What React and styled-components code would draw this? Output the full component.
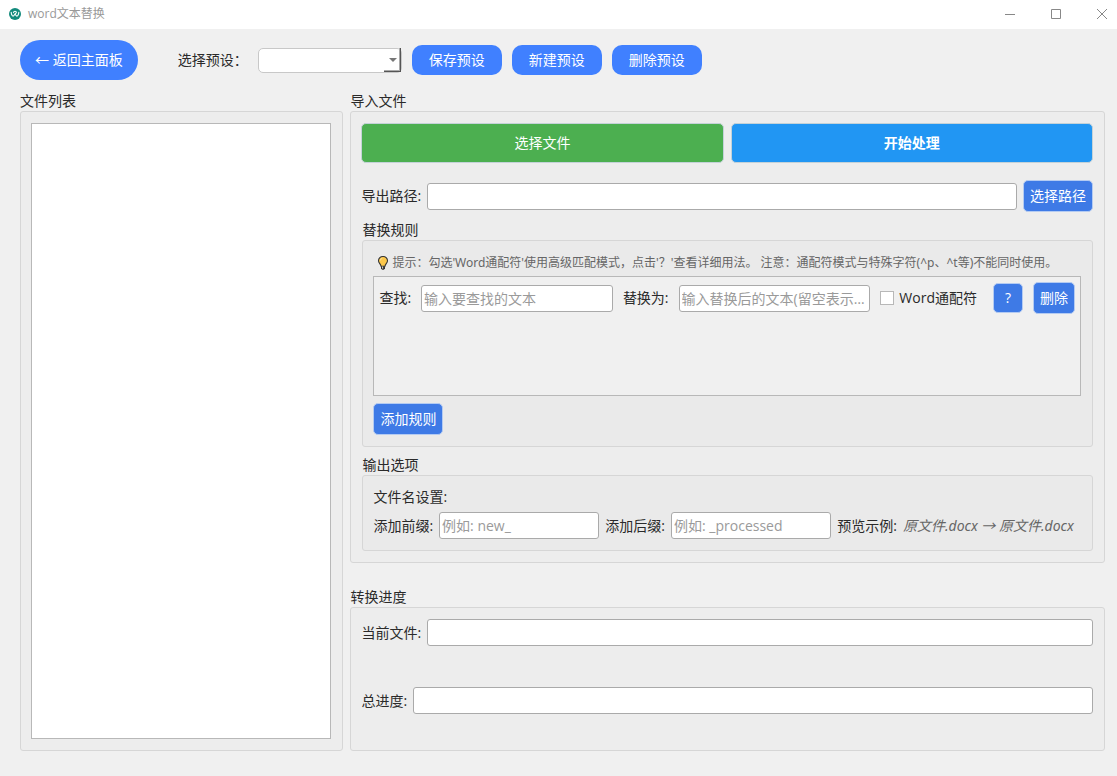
import React from "react";
import styled, { createGlobalStyle } from "styled-components";

const GlobalStyle = createGlobalStyle`
  * {
    box-sizing: border-box;
  }
  body {
    margin: 0;
    background: #f0f0f0;
  }
  body, button, input, select {
    font-family: "Open Sans", "Noto Sans CJK SC", sans-serif;
    font-size: 14px;
    line-height: 18px;
    color: #2a2a2a;
  }
`;

const Window = styled.div`
  display: flex;
  flex-direction: column;
  min-height: 100vh;
`;

const TitleBar = styled.header`
  display: flex;
  align-items: center;
  height: 29px;
  padding: 0 1px 2px 8px;
  background: #fff;
`;

const Title = styled.h1`
  flex: 1;
  margin: 0 0 0 6px;
  font-size: 12px;
  font-weight: 400;
  color: #999;
`;

const WindowButton = styled.button`
  display: flex;
  justify-content: center;
  width: 28px;
  margin-left: 18px;
  padding: 0;
  border: 0;
  background: none;
`;

const Main = styled.main`
  flex: 1;
  display: flex;
  flex-direction: column;
  gap: 12px;
  padding: 11px 12px 25px 20px;
`;

const Toolbar = styled.div`
  display: flex;
  align-items: center;
  gap: 10px;
`;

const PillButton = styled.button`
  height: ${(p) => (p.$large ? 40 : 30)}px;
  padding: 0 ${(p) => (p.$large ? 15 : 17)}px;
  border: 0;
  border-radius: ${(p) => (p.$large ? 20 : 10)}px;
  background: #4080ff;
  color: #fff;
`;

const PresetLabel = styled.label`
  margin: 0 0 0 30px;
`;

const SelectBox = styled.div`
  position: relative;
  width: 144px;

  &::before {
    content: "";
    position: absolute;
    right: 1px;
    bottom: 1px;
    width: 16px;
    height: 23px;
    border: solid #555;
    border-width: 0 1px 1px 0;
    box-shadow: inset -1px -1px #aaa;
    pointer-events: none;
  }

  &::after {
    content: "";
    position: absolute;
    right: 5px;
    top: 10px;
    border: 4px solid transparent;
    border-top-color: #777;
    border-bottom: 0;
    pointer-events: none;
  }
`;

const Select = styled.select`
  display: block;
  width: 100%;
  height: 25px;
  padding: 0 20px 0 6px;
  border: 1px solid #c8c8c8;
  border-radius: 5px;
  background: #fff;
  appearance: none;
`;

const Columns = styled.div`
  flex: 1;
  display: grid;
  grid-template-columns: 3fr 7fr;
  gap: 7px;
`;

const Column = styled.div`
  display: flex;
  flex-direction: column;
  gap: 25px;
  min-width: 0;
`;

const Group = styled.section`
  flex: ${(p) => (p.$grow ? "1 0 auto" : "none")};
  display: flex;
  flex-direction: column;
`;

const GroupTitle = styled.h2`
  margin: 0;
  padding-bottom: 2px;
  font-size: 14px;
  line-height: 17px;
  font-weight: 400;
`;

const GroupBody = styled.div`
  flex: 1;
  display: flex;
  flex-direction: column;
  gap: ${(p) => p.$gap || 0}px;
  padding: ${(p) => (p.$nested ? 12 : 11)}px 11px 11px 10px;
  border: 1px solid #d6d6d6;
  border-radius: 3px;
  background: ${(p) => (p.$nested ? "#eaeaea" : "#ededed")};
`;

const FileList = styled.ul`
  flex: 1;
  margin: 0;
  padding: 0;
  border: 1px solid #b8b8b8;
  background: #fff;
  list-style: none;
`;

const Actions = styled.div`
  display: grid;
  grid-template-columns: 1fr 1fr;
  gap: 7px;
  margin-bottom: 17px;
`;

const ActionButton = styled.button`
  height: 40px;
  border: 1px solid #c4d2d8;
  border-radius: 5px;
  background: ${(p) => p.$color};
  color: #fff;
  font-weight: ${(p) => (p.$bold ? 700 : 400)};
`;

const Row = styled.div`
  display: flex;
  align-items: center;
  gap: 6px;
`;

const Label = styled.label`
  flex: none;
  white-space: nowrap;
`;

const TextInput = styled.input`
  flex: 1;
  min-width: 0;
  height: 27px;
  padding: 0 2px;
  border: 1px solid #aaa;
  border-radius: 3px;
  background: #fff;
  text-overflow: ellipsis;

  &::placeholder {
    color: #9a9a9a;
  }
`;

const SmallButton = styled.button`
  flex: none;
  align-self: ${(p) => p.$align || "auto"};
  width: ${(p) => (p.$square ? "30px" : "auto")};
  height: ${(p) => (p.$square ? 30 : 32)}px;
  padding: 0 ${(p) => (p.$square ? 0 : 6)}px;
  border: 1px solid #b4cbf2;
  border-radius: 5px;
  background: #3e7ae6;
  color: #fff;
`;

const Sections = styled.div`
  display: flex;
  flex-direction: column;
  gap: 9px;
  margin: 9px 0 0 1px;
`;

const Hint = styled.p`
  display: flex;
  align-items: center;
  gap: 3px;
  height: 23px;
  margin: 0;
  padding: 0 0 4px 4px;
  font-family: "Noto Sans", "Noto Sans CJK SC", sans-serif;
  font-size: 12px;
  color: #666;
`;

const Rules = styled.div`
  min-height: 120px;
  margin-bottom: 7px;
  padding: 5px;
  border: 1px solid #b8b8b8;
  background: #f0f0f0;
`;

const RuleRow = styled(Row)`
  gap: 10px;
`;

const CheckLabel = styled.label`
  display: flex;
  align-items: center;
  gap: 5px;
  margin-right: 6px;
  white-space: nowrap;
`;

const Checkbox = styled.input`
  width: 14px;
  height: 14px;
  margin: 0;
  border: 1px solid #b8b8b8;
  background: #fff;
  appearance: none;

  &:checked {
    background: #3e7ae6;
  }
`;

const Preview = styled.em`
  min-width: 178px;
  font-family: "Noto Sans", "Noto Sans CJK SC", sans-serif;
  color: #666;
  white-space: nowrap;
`;

const Logo = () => (
  <svg width="14" height="14" viewBox="0 0 14 14" aria-hidden="true">
    <circle cx="7" cy="7" r="6" fill="#128a7c" />
    <path
      d="M3.2 5.4C3.4 7.8 4.4 9.4 5.4 9C6.2 8.7 6.5 7.8 7 7C7.5 7.8 7.8 8.7 8.6 9C9.6 9.4 10.6 7.8 10.8 5.4M5.6 5.6C5.6 3.8 8.4 3.8 8.4 5.6C8.4 6.2 7.6 6.6 7 7"
      fill="none"
      stroke="#fff"
      strokeWidth="1.1"
      strokeLinecap="round"
      strokeLinejoin="round"
    />
  </svg>
);

const Bulb = () => (
  <svg width="12" height="16" viewBox="0 0 12 16" aria-hidden="true">
    <path
      d="M6 1.5A4.3 4.3 0 0 0 1.5 5.8C1.5 8.2 3.8 9 4 11.2H8C8.2 9 10.5 8.2 10.5 5.8A4.3 4.3 0 0 0 6 1.5Z"
      fill="#fcc84c"
      stroke="#333"
      strokeWidth="1.1"
    />
    <path d="M4 11.2H8V13.4L6.8 14.8H5.2L4 13.4Z" fill="#333" />
    <path d="M5.6 11.5V13.5" stroke="#ddd" strokeWidth="1" />
    <path d="M3.4 5.4C3.5 4.4 4.2 3.6 5.2 3.4" fill="none" stroke="#ffe9a8" />
  </svg>
);

const WindowIcon = ({ d }) => (
  <svg width="12" height="12" viewBox="0 0 12 12" aria-hidden="true">
    <path d={d} fill="none" stroke="#888" />
  </svg>
);

const App = () => {
  return (
    <Window>
      <GlobalStyle />
      <TitleBar>
        <Logo />
        <Title>word文本替换</Title>
        <WindowButton aria-label="最小化">
          <WindowIcon d="M1 6.5H11" />
        </WindowButton>
        <WindowButton aria-label="最大化">
          <WindowIcon d="M1.5 1.5H10.5V10.5H1.5Z" />
        </WindowButton>
        <WindowButton aria-label="关闭">
          <WindowIcon d="M1 1L11 11M11 1L1 11" />
        </WindowButton>
      </TitleBar>

      <Main>
        <Toolbar>
          <PillButton $large>← 返回主面板</PillButton>
          <PresetLabel htmlFor="preset">选择预设：</PresetLabel>
          <SelectBox>
            <Select id="preset" />
          </SelectBox>
          <PillButton>保存预设</PillButton>
          <PillButton>新建预设</PillButton>
          <PillButton>删除预设</PillButton>
        </Toolbar>

        <Columns>
          <Group $grow>
            <GroupTitle>文件列表</GroupTitle>
            <GroupBody>
              <FileList />
            </GroupBody>
          </Group>

          <Column>
            <Group>
              <GroupTitle>导入文件</GroupTitle>
              <GroupBody>
                <Actions>
                  <ActionButton $color="#4caf50">选择文件</ActionButton>
                  <ActionButton $color="#2196f3" $bold>
                    开始处理
                  </ActionButton>
                </Actions>
                <Row>
                  <Label htmlFor="path">导出路径:</Label>
                  <TextInput id="path" />
                  <SmallButton>选择路径</SmallButton>
                </Row>

                <Sections>
                  <Group>
                    <GroupTitle>替换规则</GroupTitle>
                    <GroupBody $nested>
                      <Hint>
                        <Bulb />
                        提示：勾选'Word通配符'使用高级匹配模式，点击'？'查看详细用法。 注意：通配符模式与特殊字符(^p、^t等)不能同时使用。
                      </Hint>
                      <Rules>
                        <RuleRow>
                          <Label htmlFor="find">查找:</Label>
                          <TextInput id="find" placeholder="输入要查找的文本" />
                          <Label htmlFor="replace">替换为:</Label>
                          <TextInput
                            id="replace"
                            placeholder="输入替换后的文本(留空表示删除)"
                          />
                          <CheckLabel>
                            <Checkbox type="checkbox" />
                            Word通配符
                          </CheckLabel>
                          <SmallButton $square>?</SmallButton>
                          <SmallButton>删除</SmallButton>
                        </RuleRow>
                      </Rules>
                      <SmallButton $align="flex-start">添加规则</SmallButton>
                    </GroupBody>
                  </Group>

                  <Group>
                    <GroupTitle>输出选项</GroupTitle>
                    <GroupBody $nested $gap={6}>
                      <div>文件名设置:</div>
                      <Row>
                        <Label htmlFor="prefix">添加前缀:</Label>
                        <TextInput id="prefix" placeholder="例如: new_" />
                        <Label htmlFor="suffix">添加后缀:</Label>
                        <TextInput id="suffix" placeholder="例如: _processed" />
                        <Label as="span">预览示例:</Label>
                        <Preview>原文件.docx → 原文件.docx</Preview>
                      </Row>
                    </GroupBody>
                  </Group>
                </Sections>
              </GroupBody>
            </Group>

            <Group $grow>
              <GroupTitle>转换进度</GroupTitle>
              <GroupBody $gap={41}>
                <Row>
                  <Label htmlFor="current">当前文件:</Label>
                  <TextInput id="current" readOnly />
                </Row>
                <Row>
                  <Label htmlFor="total">总进度:</Label>
                  <TextInput id="total" readOnly />
                </Row>
              </GroupBody>
            </Group>
          </Column>
        </Columns>
      </Main>
    </Window>
  );
};

export default App;
